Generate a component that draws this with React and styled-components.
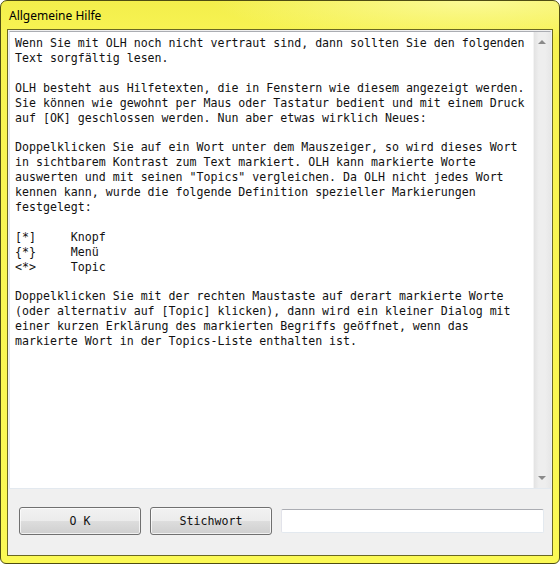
import React from "react";
import styled, { createGlobalStyle } from "styled-components";

const GlobalStyle = createGlobalStyle`
  html, body {
    margin: 0;
    padding: 0;
    background: #ffffff;
  }
`;

const mono = `"DejaVu Sans Mono", "Liberation Mono", monospace`;

const helpText = `Wenn Sie mit OLH noch nicht vertraut sind, dann sollten Sie den folgenden
Text sorgfältig lesen.

OLH besteht aus Hilfetexten, die in Fenstern wie diesem angezeigt werden.
Sie können wie gewohnt per Maus oder Tastatur bedient und mit einem Druck
auf [OK] geschlossen werden. Nun aber etwas wirklich Neues:

Doppelklicken Sie auf ein Wort unter dem Mauszeiger, so wird dieses Wort
in sichtbarem Kontrast zum Text markiert. OLH kann markierte Worte
auswerten und mit seinen "Topics" vergleichen. Da OLH nicht jedes Wort
kennen kann, wurde die folgende Definition spezieller Markierungen
festgelegt:

[*]     Knopf
{*}     Menü
<*>     Topic

Doppelklicken Sie mit der rechten Maustaste auf derart markierte Worte
(oder alternativ auf [Topic] klicken), dann wird ein kleiner Dialog mit
einer kurzen Erklärung des markierten Begriffs geöffnet, wenn das
markierte Wort in der Topics-Liste enthalten ist.`;

function Help() {
  return (
    <Window>
      <TitleBar>Allgemeine Hilfe</TitleBar>
      <Client>
        <TextBox>
          <TextBody>{helpText}</TextBody>
          <ScrollBar>
            <Arrow up />
            <Arrow />
          </ScrollBar>
        </TextBox>
        <ButtonRow>
          <Button>O K</Button>
          <Button>Stichwort</Button>
          <Field />
        </ButtonRow>
      </Client>
    </Window>
  );
}

export default function App() {
  return (
    <>
      <GlobalStyle />
      <Help />
    </>
  );
}

const Window = styled.div`
  box-sizing: border-box;
  width: 560px;
  height: 564px;
  display: flex;
  flex-direction: column;
  padding: 0 6px 7px 6px;
  border: 1px solid #4f4d12;
  border-radius: 7px 7px 6px 6px;
  background:
    radial-gradient(ellipse 260px 40px at 470px 0px, #fbfa96 0%, rgba(251, 250, 150, 0) 100%),
    linear-gradient(180deg, #f3ee4c 0px, #f7f352 30px, #fbf955 100%);
`;

const TitleBar = styled.div`
  height: 28px;
  flex-shrink: 0;
  padding-left: 2px;
  font-family: "Noto Sans", "Open Sans", sans-serif;
  font-size: 12px;
  line-height: 29px;
  color: #000;
`;

const Client = styled.div`
  flex: 1;
  display: flex;
  flex-direction: column;
  min-height: 0;
  border: 1px solid #6a6822;
  background: #f0f0f0;
  padding: 1px 1px 0 1px;
`;

const TextBox = styled.div`
  box-sizing: border-box;
  height: 458px;
  display: flex;
  border: 1px solid #abadb3;
  border-color: #abadb3 #e3e9ef #e3e9ef #e3e9ef;
  background: #fff;
`;

const TextBody = styled.pre`
  flex: 1;
  margin: 0;
  padding: 4px 0 0 5px;
  font-family: ${mono};
  font-size: 11.6px;
  line-height: 14.9px;
  color: #111;
  white-space: pre;
  overflow: hidden;
`;

const ScrollBar = styled.div`
  width: 17px;
  display: flex;
  flex-direction: column;
  justify-content: space-between;
  align-items: center;
  background: linear-gradient(90deg, #e3e3e3, #eeeeee 30%, #eeeeee 70%, #e8e8e8);
  border-left: 1px solid #f4f4f4;
  padding: 8px 0;
  box-sizing: border-box;
`;

const Arrow = styled.div`
  width: 0;
  height: 0;
  border-left: 4px solid transparent;
  border-right: 4px solid transparent;
  ${(p) =>
    p.up
      ? "border-bottom: 4px solid #8a8a8a;"
      : "border-top: 4px solid #8a8a8a;"}
`;

const ButtonRow = styled.div`
  flex: 1;
  display: flex;
  align-items: center;
  padding: 0 7px 2px 10px;
  gap: 9px;
`;

const Button = styled.button`
  box-sizing: border-box;
  width: 122px;
  height: 28px;
  border: 1px solid #707070;
  border-radius: 3px;
  background: linear-gradient(180deg, #f2f2f2 0%, #ebebeb 50%, #dddddd 51%, #cfcfcf 100%);
  box-shadow: inset 0 0 0 1px rgba(255, 255, 255, 0.7);
  font-family: ${mono};
  font-size: 11.6px;
  color: #111;
  padding: 0;
`;

const Field = styled.div`
  box-sizing: border-box;
  flex: 1;
  height: 24px;
  border: 1px solid #abadb3;
  border-color: #abadb3 #e3e9ef #e3e9ef #e2e3ea;
  border-radius: 2px;
  background: #fff;
`;
